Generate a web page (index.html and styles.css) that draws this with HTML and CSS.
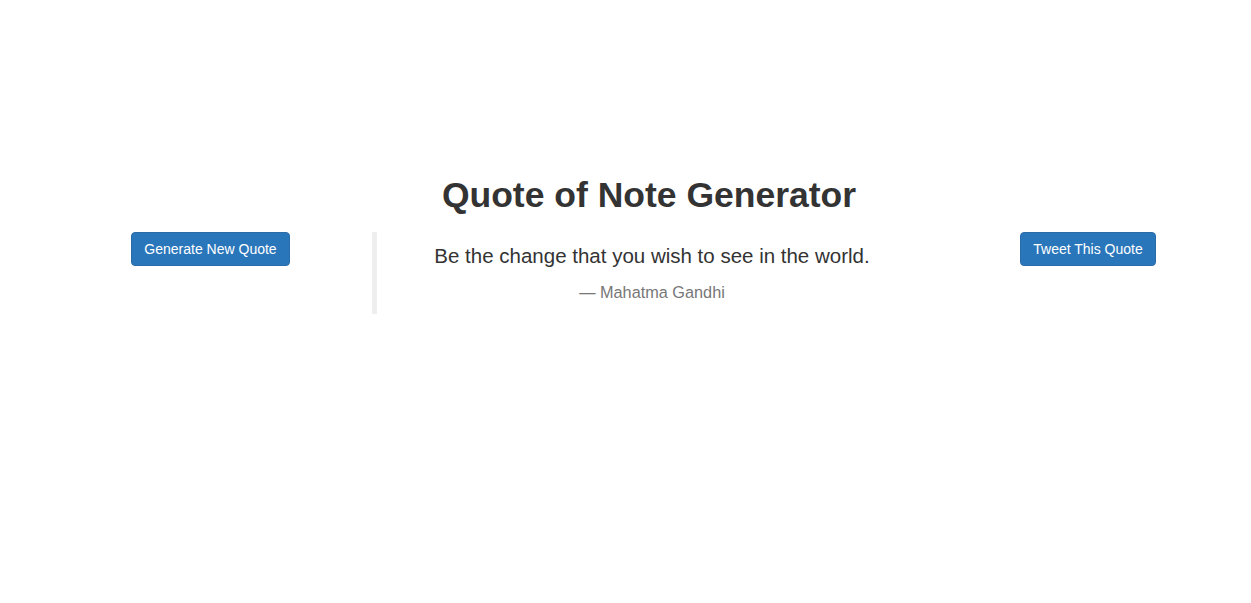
FILE: index.html
```html
<!DOCTYPE html>
<html lang="en">
<head>
<meta charset="utf-8">
<title>Quote of Note Generator</title>
<link rel="stylesheet" href="styles.css">
</head>
<body>
<div class="page">
  <div class="container">
    <h1 class="title">Quote of Note Generator</h1>
    <div class="row">
      <div class="col col-side">
        <button class="btn btn-primary" type="button">Generate New Quote</button>
      </div>
      <div class="col col-main">
        <blockquote class="quote">
          <p class="quote-text">Be the change that you wish to see in the world.</p>
          <footer class="quote-author">Mahatma Gandhi</footer>
        </blockquote>
      </div>
      <div class="col col-side">
        <button class="btn btn-primary" type="button">Tweet This Quote</button>
      </div>
    </div>
  </div>
</div>
</body>
</html>
```

FILE: styles.css
```css
* { box-sizing: border-box; }

html, body {
  margin: 0;
  padding: 0;
  background: #fff;
}

body {
  font-family: "Liberation Sans", Arial, Helvetica, sans-serif;
  color: #333;
  font-size: 14px;
  line-height: 1.42857;
}

.page {
  padding-left: 47px;
  padding-top: 176px;
}

.container {
  width: 1170px;
  margin: 0 auto;
}

.title {
  margin: 0 0 17.5px;
  font-size: 35.5px;
  font-weight: 700;
  line-height: 38.5px;
  text-align: center;
  color: #333;
}

.row {
  display: grid;
  grid-template-columns: 293px 585px 292px;
}

.col {
  padding: 0 15px;
}

.col-side {
  text-align: center;
}

.btn {
  display: inline-block;
  height: 34px;
  padding: 6px 12px;
  font-family: "Liberation Sans", Arial, Helvetica, sans-serif;
  font-size: 14px;
  line-height: 20px;
  border-radius: 4px;
  border: 1px solid #2a6ca8;
  cursor: pointer;
}

.btn-primary {
  background: #2a76bb;
  color: #fff;
}

.quote {
  margin: 0;
  padding: 10px 20px;
  border-left: 5px solid #eee;
  text-align: center;
}

.quote-text {
  margin: 0 0 10px;
  font-size: 20.5px;
  line-height: 28px;
  color: #333;
}

.quote-author {
  display: block;
  font-size: 16.3px;
  line-height: 24px;
  color: #777;
}

.quote-author::before {
  content: "\2014 \00A0";
}
```
